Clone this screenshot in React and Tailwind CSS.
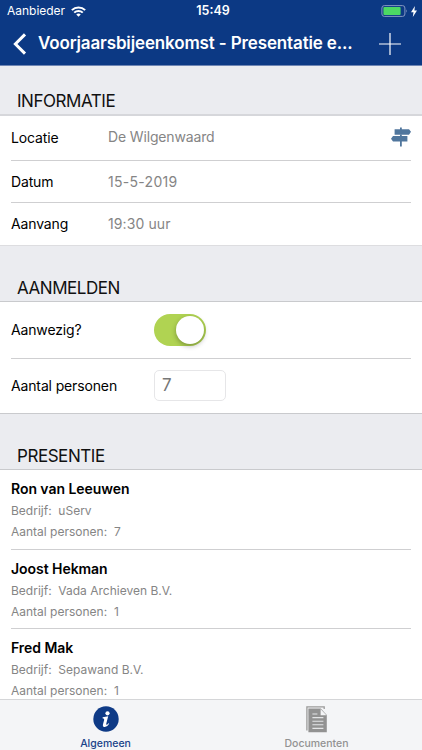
const personen = [
  { naam: "Ron van Leeuwen", bedrijf: "uServ", aantal: 7 },
  { naam: "Joost Hekman", bedrijf: "Vada Archieven B.V.", aantal: 1 },
  { naam: "Fred Mak", bedrijf: "Sepawand B.V.", aantal: 1 },
];

function StatusBar() {
  return (
    <div className="h-[22px] pl-[7px] pr-[5px] grid grid-cols-3 items-center">
      <div className="flex items-center gap-[6px]">
        <span className="text-[12px] leading-none tracking-[-0.02px]">Aanbieder</span>
        <svg width="15" height="11" viewBox="0 0 14 11" preserveAspectRatio="none" fill="none" stroke="currentColor" strokeWidth="1.9">
          <path d="M0.8 4.1a8.8 8.8 0 0 1 12.4 0" />
          <path d="M3 6.6a5.7 5.7 0 0 1 8 0" />
          <path d="M7 10.7 4.9 8.5a3 3 0 0 1 4.2 0z" fill="currentColor" stroke="none" />
        </svg>
      </div>
      <span className="pt-px pl-[2px] text-center text-[12.5px] leading-none font-semibold">15:49</span>
      <div className="flex items-center justify-end gap-[3px]">
        <svg width="27" height="12" viewBox="0 0 27 12">
          <rect x="0.9" y="0.6" width="23" height="10.8" rx="2.4" fill="none" stroke="#8498c2" strokeWidth="1" />
          <rect x="2.4" y="2.1" width="17.2" height="7.8" rx="1" fill="#4cd964" />
          <path d="M25 4.2q1.6 1.8 0 3.6z" fill="#8498c2" />
        </svg>
        <svg width="6" height="11" viewBox="0 0 6 11" fill="currentColor">
          <path d="M3.9 0 0 6.2h2.5L1.8 11 6 4.5H3.4z" />
        </svg>
      </div>
    </div>
  );
}

function NavBar() {
  return (
    <div className="h-[43px] pl-[13px] pr-[21px] flex items-center">
      <svg width="14" height="22" viewBox="0 0 14 22" fill="none" stroke="currentColor" strokeWidth="3">
        <path d="M12 1.4 2.4 11 12 20.6" />
      </svg>
      <h1 className="ml-[11px] flex-1 text-[17px] tracking-[-0.14px] font-semibold whitespace-nowrap">
        Voorjaarsbijeenkomst - Presentatie e...
      </h1>
      <svg width="22" height="22" viewBox="0 0 22 22" stroke="currentColor" strokeWidth="1.2">
        <path d="M11 0v22M0 11h22" />
      </svg>
    </div>
  );
}

function SectionTitle({ children, className }) {
  return (
    <div className={`bg-[#ebecf0] pl-[17px] flex items-end ${className}`}>
      <h2 className="text-[17px] leading-[26px] tracking-[-0.45px] text-[#111]">{children}</h2>
    </div>
  );
}

function Row({ label, children, labelWidth, className }) {
  return (
    <div className={`mx-[11px] flex items-center border-[#cfcfd1] ${className}`}>
      <span className={`${labelWidth} shrink-0 text-[14px] leading-[20px] tracking-[-0.14px] text-black`}>{label}</span>
      {children}
    </div>
  );
}

function Signpost() {
  return (
    <svg className="ml-auto mb-px" width="20" height="20" viewBox="0 0 20 20" fill="#50769d">
      <path d="M9 0.5h1.8v1.7H18L20 4.8 18 7.8H3.6V2.2H9z" />
      <path d="M16.4 9v5.6h-5.6v5H9v-5H2L0 11.8 2 9z" />
      <path d="M9 7.5h1.8v2H9z" />
    </svg>
  );
}

function TabBar() {
  return (
    <nav className="h-[51px] shrink-0 bg-[#f4f5f7] border-t border-[#d5d6d8] grid grid-cols-2 text-[10.5px] leading-[13px] font-medium">
      <div className="flex flex-col items-center pt-[6px] text-[#1b4389]">
        <svg width="26" height="26" viewBox="0 0 26 26">
          <circle cx="13" cy="13" r="12.7" fill="#0e3a86" />
          <g fill="#fff">
            <circle cx="14.5" cy="7.3" r="2.1" />
            <path d="M9.7 11.2q2.8-.2 5.5-.9l-1.9 7.3q-.3 1.2.3 1.2.7 0 1.8-1.6l.8.6q-2 3.3-4.4 3.3-2.5 0-1.8-2.8l1.2-4.6q.3-1.3-1.7-1.4z" />
          </g>
        </svg>
        <span className="mt-[5px]">Algemeen</span>
      </div>
      <div className="flex flex-col items-center pt-[6px] text-[#929292]">
        <svg width="22" height="27" viewBox="0 0 22 27">
          <path d="M0.9 24.6V0.9H18.2V3" fill="none" stroke="#9a9a9a" strokeWidth="1.3" />
          <path d="M2.4 2.4h12.4l6 6.6v17.2H2.4z" fill="#929292" />
          <path d="M14.6 3v6.2h5.8z" fill="#f4f5f7" />
          <path d="M6.4 8h5M6.4 11.6h11M6.4 15.2h11M6.4 18.8h11M6.4 22.4h11" stroke="#e4e5e7" strokeWidth="1.1" />
        </svg>
        <span className="mt-[4px]">Documenten</span>
      </div>
    </nav>
  );
}

export default function App() {
  return (
    <div className="w-[422px] h-[750px] flex flex-col overflow-hidden bg-white font-['Inter',sans-serif]">
      <header className="h-[66px] shrink-0 bg-[#0c3984] border-b border-[#6f86b4] text-white">
        <StatusBar />
        <NavBar />
      </header>

      <main className="flex-1 min-h-0 overflow-hidden">
        <SectionTitle className="h-[50px] border-b-2 border-b-[#d6d7db]">INFORMATIE</SectionTitle>
        <Row label="Locatie" labelWidth="w-[97px]" className="h-[45px] pb-px border-b">
          <span className="pb-[2px] text-[14px] tracking-[-0.15px] text-[#858585]">De Wilgenwaard</span>
          <Signpost />
        </Row>
        <Row label="Datum" labelWidth="w-[97px]" className="h-[42px] border-b">
          <span className="text-[14px] tracking-[0.3px] text-[#858585]">15-5-2019</span>
        </Row>
        <Row label="Aanvang" labelWidth="w-[97px]" className="h-[42px] pb-px">
          <span className="text-[14px] tracking-[0.1px] text-[#858585]">19:30 uur</span>
        </Row>

        <SectionTitle className="h-[57px] border-t border-t-[#dddde0] border-b border-b-[#c9cacd]">AANMELDEN</SectionTitle>
        <Row label="Aanwezig?" labelWidth="w-[143px]" className="h-[57px] pb-px border-b">
          <div className="w-[52px] h-[32px] rounded-full bg-[#b0d352] p-[2px] flex justify-end">
            <div className="w-[28px] h-[28px] rounded-full bg-white shadow-[0_2px_5px_rgba(0,0,0,0.3)]" />
          </div>
        </Row>
        <Row label="Aantal personen" labelWidth="w-[143px]" className="h-[54px] pb-px">
          <div className="w-[72px] h-[31px] rounded-[5px] border border-[#e6e6e8] pl-[7px] pt-px flex items-center text-[17px] text-[#777]">
            7
          </div>
        </Row>

        <SectionTitle className="h-[57px] border-t border-t-[#c9cacd] border-b border-b-[#c9cacd]">PRESENTIE</SectionTitle>
        {personen.map((p) => (
          <div key={p.naam} className="mx-[11px] h-[79.5px] border-b border-[#cfcfd1] pt-[9px]">
            <p className="text-[14px] leading-[20px] tracking-[-0.05px] font-semibold text-black">{p.naam}</p>
            <p className="mt-px text-[12px] leading-[21px] text-[#858585] whitespace-pre">{`Bedrijf:  ${p.bedrijf}`}</p>
            <p className="text-[12px] leading-[21px] text-[#858585] whitespace-pre">{`Aantal personen:  ${p.aantal}`}</p>
          </div>
        ))}
      </main>

      <TabBar />
    </div>
  );
}
